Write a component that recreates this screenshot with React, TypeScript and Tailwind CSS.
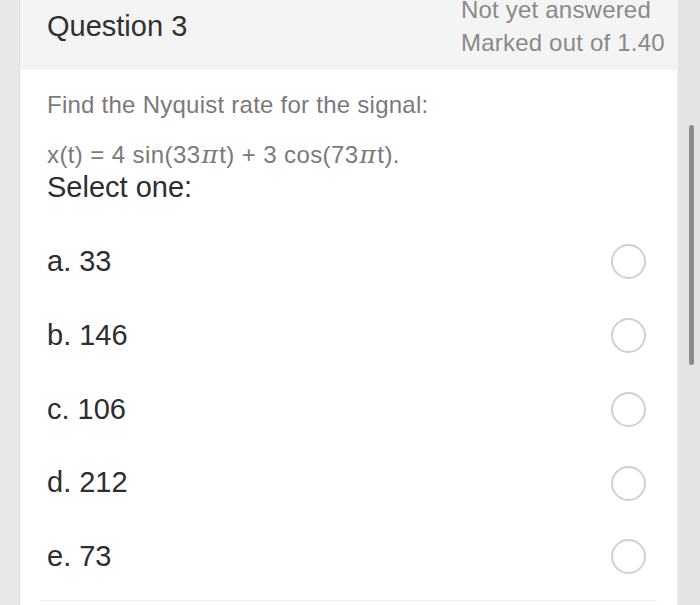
import React from "react";

const options = ["a. 33", "b. 146", "c. 106", "d. 212", "e. 73"];

function Pi() {
  return (
    <span
      style={{ fontFamily: '"DejaVu Serif", "Liberation Serif", serif' }}
      className="italic text-[25px] mx-[1px]"
    >
      π
    </span>
  );
}

export default function App() {
  return (
    <div
      className="relative w-[700px] h-[605px] overflow-hidden bg-[#e8e8e8] flex"
      style={{ fontFamily: '"Liberation Sans", Arial, sans-serif' }}
    >
      <div className="w-[20px] shrink-0 border-r border-[#dcdcdc]" />
      <div className="w-[657px] shrink-0 bg-white flex flex-col">
        <div className="h-[70px] shrink-0 bg-[#f4f4f4] flex justify-between pl-[27px]">
          <div className="text-[29px] text-[#303030] leading-[34px] pt-[9px]">Question 3</div>
          <div className="w-[216px] shrink-0 flex flex-col text-[24px] text-[#8a8a8a] leading-[33px] -mt-[7px] tracking-[0.2px]">
            <span>Not yet answered</span>
            <span>Marked out of 1.40</span>
          </div>
        </div>
        <div className="pl-[27px] pt-[20px] flex flex-col shrink-0">
          <div className="text-[24px] text-[#7a7a7a] leading-[30px] tracking-[0.25px]">
            Find the Nyquist rate for the signal:
          </div>
          <div className="text-[24px] text-[#7a7a7a] leading-[30px] mt-[20px] tracking-[0.4px]">
            x(t) = 4 sin(33<Pi />t) + 3 cos(73<Pi />t).
          </div>
          <div className="text-[29px] text-[#2e2e2e] leading-[34px]">Select one:</div>
        </div>
        <div className="flex flex-col mt-[21px] pl-[27px] pr-[31px] shrink-0">
          {options.map((o) => (
            <div key={o} className="h-[73.75px] flex items-center justify-between">
              <span className="text-[29px] text-[#2e2e2e]">{o}</span>
              <span className="w-[35px] h-[35px] rounded-full border-2 border-[#d0d0d0] bg-white" />
            </div>
          ))}
        </div>
        <div className="mt-auto mx-[20px] mb-[4px] h-[1px] bg-[#f0f0f0] shrink-0" />
      </div>
      <div className="flex-1 border-l border-[#f2f2f2] bg-[#e4e4e4]" />
      <div className="absolute left-[689px] top-[125px] w-[5px] h-[240px] rounded-full bg-[#8c8c8c]" />
    </div>
  );
}
